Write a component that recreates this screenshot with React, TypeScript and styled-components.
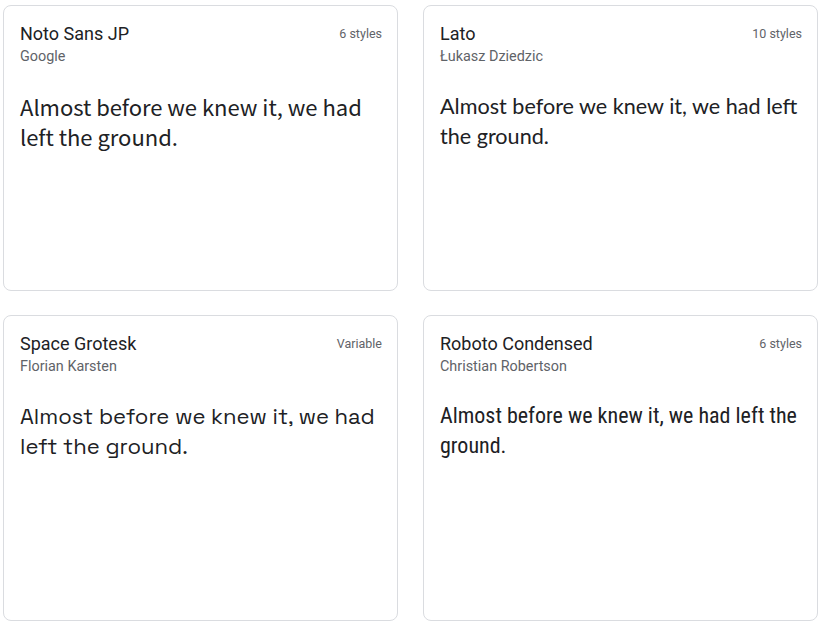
import React from "react";
import styled, { createGlobalStyle } from "styled-components";

const Global = createGlobalStyle`
  html, body { margin: 0; padding: 0; background: #ffffff; }
  body { font-family: Roboto, "Liberation Sans", sans-serif; }
`;

const Grid = styled.div`
  display: grid;
  grid-template-columns: 395px 395px;
  grid-template-rows: 286px 306px;
  column-gap: 25px;
  row-gap: 24px;
  padding: 5px 4px 4px 3px;
`;

const Card = styled.div`
  box-sizing: border-box;
  border: 1px solid #dadce0;
  border-radius: 8px;
  padding: 16px 15px 16px 16px;
  display: flex;
  flex-direction: column;
  background: #fff;
`;

const Header = styled.div`
  display: flex;
  justify-content: space-between;
  align-items: flex-start;
`;

const Name = styled.div`
  font-family: Roboto, "Liberation Sans", sans-serif;
  font-size: 18px;
  line-height: 24px;
  color: #202124;
`;

const Count = styled.div`
  font-family: Roboto, "Liberation Sans", sans-serif;
  font-size: 12.5px;
  line-height: 16px;
  color: #5f6368;
  margin-top: 4px;
`;

const Designer = styled.div`
  font-family: Roboto, "Liberation Sans", sans-serif;
  font-size: 14.4px;
  line-height: 20px;
  color: #5f6368;
  margin-top: 1px;
`;

const Sample = styled.div<{ $font: string; $size: number }>`
  margin-top: 24px;
  font-family: ${(p) => p.$font};
  font-size: ${(p) => p.$size}px;
  line-height: 30px;
  color: #202124;
`;

const fonts = [
  { name: "Noto Sans JP", designer: "Google", count: "6 styles", font: `"Noto Sans JP", "Noto Sans CJK JP", "Noto Sans", sans-serif`, size: 22 },
  { name: "Lato", designer: "Łukasz Dziedzic", count: "10 styles", font: `Lato, sans-serif`, size: 21.6 },
  { name: "Space Grotesk", designer: "Florian Karsten", count: "Variable", font: `"Space Grotesk", "DejaVu Sans", sans-serif`, size: 22 },
  { name: "Roboto Condensed", designer: "Christian Robertson", count: "6 styles", font: `"Roboto Condensed", "Liberation Sans Narrow", "DejaVu Sans Condensed", sans-serif`, size: 22 },
];

export default function App() {
  return (
    <>
      <Global />
      <Grid>
        {fonts.map((f) => (
          <Card key={f.name}>
            <Header>
              <Name>{f.name}</Name>
              <Count>{f.count}</Count>
            </Header>
            <Designer>{f.designer}</Designer>
            <Sample $font={f.font} $size={f.size}>
              Almost before we knew it, we had left the ground.
            </Sample>
          </Card>
        ))}
      </Grid>
    </>
  );
}
